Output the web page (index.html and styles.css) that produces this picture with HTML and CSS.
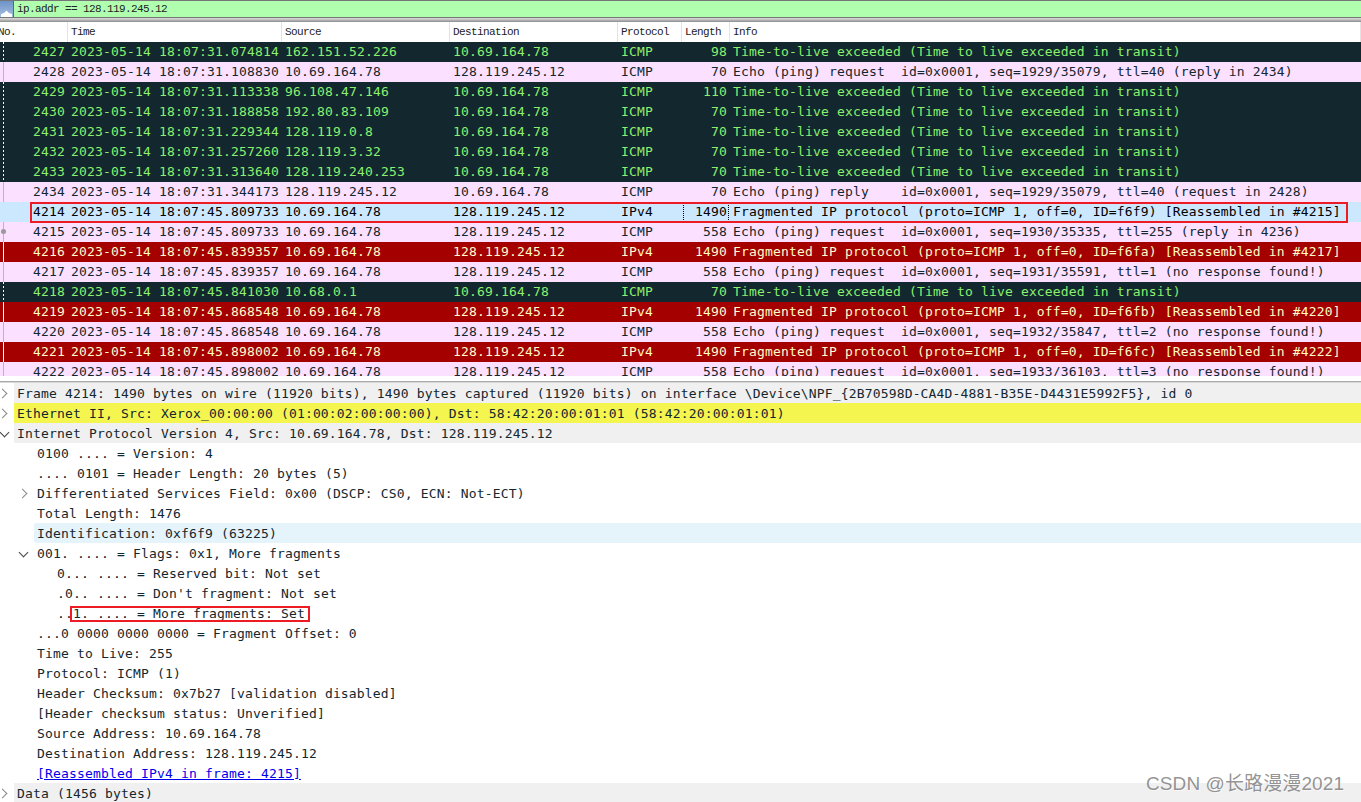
FILE: index.html
```html
<!DOCTYPE html>
<html lang="en">
<head>
<meta charset="utf-8">
<title>Wireshark</title>
<link rel="stylesheet" href="styles.css">
</head>
<body>
<div class="filter">
  <svg class="bookmark" width="13" height="16" viewBox="0 0 13 16"><defs><linearGradient id="bm" x1="0" y1="0" x2="0" y2="1"><stop offset="0" stop-color="#6f93c8"/><stop offset="1" stop-color="#a3bde0"/></linearGradient></defs><rect width="13" height="16" fill="url(#bm)"/><path d="M1 16V13L4 12L6.500 9.500L9 12L12 13V16Z" fill="#fff"/></svg>
  <div class="filter-input">ip.addr == 128.119.245.12</div>
</div>
<div class="splitter"></div>
<div class="packets">
  <div class="row head"><span class="no">No.</span><span>Time</span><span>Source</span><span>Destination</span><span>Protocol</span><span class="len">Length</span><span>Info</span></div>
  <div class="row err"><span class="no">2427</span><span>2023-05-14 18:07:31.074814</span><span>162.151.52.226</span><span>10.69.164.78</span><span>ICMP</span><span class="len">98</span><span>Time-to-live exceeded (Time to live exceeded in transit)</span></div>
  <div class="row ping"><span class="no">2428</span><span>2023-05-14 18:07:31.108830</span><span>10.69.164.78</span><span>128.119.245.12</span><span>ICMP</span><span class="len">70</span><span>Echo (ping) request  id=0x0001, seq=1929/35079, ttl=40 (reply in 2434)</span></div>
  <div class="row err"><span class="no">2429</span><span>2023-05-14 18:07:31.113338</span><span>96.108.47.146</span><span>10.69.164.78</span><span>ICMP</span><span class="len">110</span><span>Time-to-live exceeded (Time to live exceeded in transit)</span></div>
  <div class="row err"><span class="no">2430</span><span>2023-05-14 18:07:31.188858</span><span>192.80.83.109</span><span>10.69.164.78</span><span>ICMP</span><span class="len">70</span><span>Time-to-live exceeded (Time to live exceeded in transit)</span></div>
  <div class="row err"><span class="no">2431</span><span>2023-05-14 18:07:31.229344</span><span>128.119.0.8</span><span>10.69.164.78</span><span>ICMP</span><span class="len">70</span><span>Time-to-live exceeded (Time to live exceeded in transit)</span></div>
  <div class="row err"><span class="no">2432</span><span>2023-05-14 18:07:31.257260</span><span>128.119.3.32</span><span>10.69.164.78</span><span>ICMP</span><span class="len">70</span><span>Time-to-live exceeded (Time to live exceeded in transit)</span></div>
  <div class="row err"><span class="no">2433</span><span>2023-05-14 18:07:31.313640</span><span>128.119.240.253</span><span>10.69.164.78</span><span>ICMP</span><span class="len">70</span><span>Time-to-live exceeded (Time to live exceeded in transit)</span></div>
  <div class="row ping"><span class="no">2434</span><span>2023-05-14 18:07:31.344173</span><span>128.119.245.12</span><span>10.69.164.78</span><span>ICMP</span><span class="len">70</span><span>Echo (ping) reply    id=0x0001, seq=1929/35079, ttl=40 (request in 2428)</span></div>
  <div class="row sel"><span class="no">4214</span><span>2023-05-14 18:07:45.809733</span><span>10.69.164.78</span><span>128.119.245.12</span><span>IPv4</span><span class="len">1490</span><span>Fragmented IP protocol (proto=ICMP 1, off=0, ID=f6f9) [Reassembled in #4215]</span></div>
  <div class="row ping dot"><span class="no">4215</span><span>2023-05-14 18:07:45.809733</span><span>10.69.164.78</span><span>128.119.245.12</span><span>ICMP</span><span class="len">558</span><span>Echo (ping) request  id=0x0001, seq=1930/35335, ttl=255 (reply in 4236)</span></div>
  <div class="row frag"><span class="no">4216</span><span>2023-05-14 18:07:45.839357</span><span>10.69.164.78</span><span>128.119.245.12</span><span>IPv4</span><span class="len">1490</span><span>Fragmented IP protocol (proto=ICMP 1, off=0, ID=f6fa) [Reassembled in #4217]</span></div>
  <div class="row ping"><span class="no">4217</span><span>2023-05-14 18:07:45.839357</span><span>10.69.164.78</span><span>128.119.245.12</span><span>ICMP</span><span class="len">558</span><span>Echo (ping) request  id=0x0001, seq=1931/35591, ttl=1 (no response found!)</span></div>
  <div class="row err"><span class="no">4218</span><span>2023-05-14 18:07:45.841030</span><span>10.68.0.1</span><span>10.69.164.78</span><span>ICMP</span><span class="len">70</span><span>Time-to-live exceeded (Time to live exceeded in transit)</span></div>
  <div class="row frag"><span class="no">4219</span><span>2023-05-14 18:07:45.868548</span><span>10.69.164.78</span><span>128.119.245.12</span><span>IPv4</span><span class="len">1490</span><span>Fragmented IP protocol (proto=ICMP 1, off=0, ID=f6fb) [Reassembled in #4220]</span></div>
  <div class="row ping"><span class="no">4220</span><span>2023-05-14 18:07:45.868548</span><span>10.69.164.78</span><span>128.119.245.12</span><span>ICMP</span><span class="len">558</span><span>Echo (ping) request  id=0x0001, seq=1932/35847, ttl=2 (no response found!)</span></div>
  <div class="row frag"><span class="no">4221</span><span>2023-05-14 18:07:45.898002</span><span>10.69.164.78</span><span>128.119.245.12</span><span>IPv4</span><span class="len">1490</span><span>Fragmented IP protocol (proto=ICMP 1, off=0, ID=f6fc) [Reassembled in #4222]</span></div>
  <div class="row ping"><span class="no">4222</span><span>2023-05-14 18:07:45.898002</span><span>10.69.164.78</span><span>128.119.245.12</span><span>ICMP</span><span class="len">558</span><span>Echo (ping) request  id=0x0001, seq=1933/36103, ttl=3 (no response found!)</span></div>
  <div class="mark mark-row"></div>
</div>
<div class="splitter2"></div>
<div class="details">
  <div class="line top closed">Frame 4214: 1490 bytes on wire (11920 bits), 1490 bytes captured (11920 bits) on interface \Device\NPF_{2B70598D-CA4D-4881-B35E-D4431E5992F5}, id 0</div>
  <div class="line top closed yellow">Ethernet II, Src: Xerox_00:00:00 (01:00:02:00:00:00), Dst: 58:42:20:00:01:01 (58:42:20:00:01:01)</div>
  <div class="line top open">Internet Protocol Version 4, Src: 10.69.164.78, Dst: 128.119.245.12</div>
  <div class="line l1">0100 .... = Version: 4</div>
  <div class="line l1">.... 0101 = Header Length: 20 bytes (5)</div>
  <div class="line l1 closed">Differentiated Services Field: 0x00 (DSCP: CS0, ECN: Not-ECT)</div>
  <div class="line l1">Total Length: 1476</div>
  <div class="line hl">Identification: 0xf6f9 (63225)</div>
  <div class="line l1 open">001. .... = Flags: 0x1, More fragments</div>
  <div class="line l2">0... .... = Reserved bit: Not set</div>
  <div class="line l2">.0.. .... = Don't fragment: Not set</div>
  <div class="line l2">..1. .... = More fragments: Set<div class="mark mark-flag"></div></div>
  <div class="line l1">...0 0000 0000 0000 = Fragment Offset: 0</div>
  <div class="line l1">Time to Live: 255</div>
  <div class="line l1">Protocol: ICMP (1)</div>
  <div class="line l1">Header Checksum: 0x7b27 [validation disabled]</div>
  <div class="line l1">[Header checksum status: Unverified]</div>
  <div class="line l1">Source Address: 10.69.164.78</div>
  <div class="line l1">Destination Address: 128.119.245.12</div>
  <div class="line l1 link"><a>[Reassembled IPv4 in frame: 4215]</a></div>
  <div class="line top closed">Data (1456 bytes)</div>
</div>
<div class="watermark">CSDN @长路漫漫2021</div>
</body>
</html>
```
FILE: styles.css
```css
* { box-sizing: border-box; }
html, body { margin: 0; height: 802px; overflow: hidden; background: #fff; }
body { position: relative; font-family: "DejaVu Sans Mono", "Liberation Mono", monospace; font-size: 13px; letter-spacing: .17px; color: #12272e; }
.filter { height: 18px; display: flex; background: #aaa; border-top: 1px solid #777; border-bottom: 1px solid #777; }
.bookmark { flex: none; }
.filter-input { flex: 1; background: #afffaf; border-left: 1px solid #666; padding-left: 3px; font-family: "Liberation Mono", monospace; font-size: 11px; letter-spacing: -.6px; line-height: 17px; color: #222; }
.splitter { height: 4px; background: linear-gradient(#dcdcdc, #bbb 50%, #888); }
.packets { height: 354px; overflow: hidden; position: relative; }
.row { position: relative; display: grid; grid-template-columns: 68px 214px 168px 168px 64px 48px 1fr; height: 20px; line-height: 19px; white-space: pre; }
.row span { padding-left: 3px; overflow: hidden; }
.row .no, .row .len { text-align: right; padding: 0 3px 0 0; }
.head { background: #fff; font-family: "Liberation Mono", monospace; font-size: 11px; letter-spacing: -.6px; line-height: 21px; color: #222; }
.head span { border-right: 1px solid #e3e3e3; }
.row.head .no { text-align: left; text-indent: -2px; padding: 0; }
.row.head .len { text-align: left; padding: 0 0 0 3px; }
.err { background: #12272e; color: #8cf06e; }
.ping { background: #fce0ff; color: #12272e; }
.frag { background: #a40000; color: #fffdc8; }
.sel { background: #cce8ff; color: #000; }
.row.sel .len { margin: 0 1px 0 1px; padding-right: 1px; border-left: 1px dotted #000; border-right: 1px dotted #000; }
.row::before { content: ""; position: absolute; left: 3px; top: 0; bottom: 0; width: 1px; background: #b8b8b8; }
.err::before { background: repeating-linear-gradient(#fff 0 2px, transparent 2px 4px); }
.frag::before { background: #fff; }
.head::before, .sel::before { display: none; }
.dot::after { content: ""; position: absolute; left: 1px; top: 7px; width: 5px; height: 5px; border-radius: 50%; background: #999; }
.mark { position: absolute; border: 2px solid #ed1c24; pointer-events: none; }
.mark-row { left: 30px; top: 180px; width: 1318px; height: 21px; }
.splitter2 { height: 7px; background: linear-gradient(#fff 0 5px, #aaa 5px 6px, #d8d8d8 6px); }
.details { position: relative; }
.line { height: 20px; line-height: 21px; padding-left: 17px; position: relative; white-space: pre; }
.top { background: #f0f0f0; margin-left: 14px; padding-left: 3px; }
.yellow { background: #f5f550; }
.l1 { padding-left: 37px; }
.l2 { padding-left: 57px; }
.hl { background: #e5f3fb; margin-left: 34px; padding-left: 3px; border-radius: 2px 0 0 2px; }
.closed::before, .open::before { content: ""; position: absolute; width: 6px; height: 6px; border-right: 1.500px solid #888; border-bottom: 1.500px solid #888; }
.closed::before { transform: rotate(-45deg); top: 7px; left: 19px; }
.open::before { transform: rotate(45deg); top: 6px; left: 20px; border-color: #444; }
.top.closed::before { left: -15px; }
.top.open::before { left: -13px; }
.link a { color: #0000ee; text-decoration: underline; }
.mark-flag { left: 70px; top: 3px; width: 240px; height: 16px; }
.watermark { position: absolute; left: 1146px; top: 768px; font-family: "Liberation Sans", "Noto Sans CJK SC", sans-serif; font-size: 19px; letter-spacing: .1px; color: rgba(120,120,120,.8); text-shadow: 1px 1px 0 rgba(255,255,255,.5); }
```
